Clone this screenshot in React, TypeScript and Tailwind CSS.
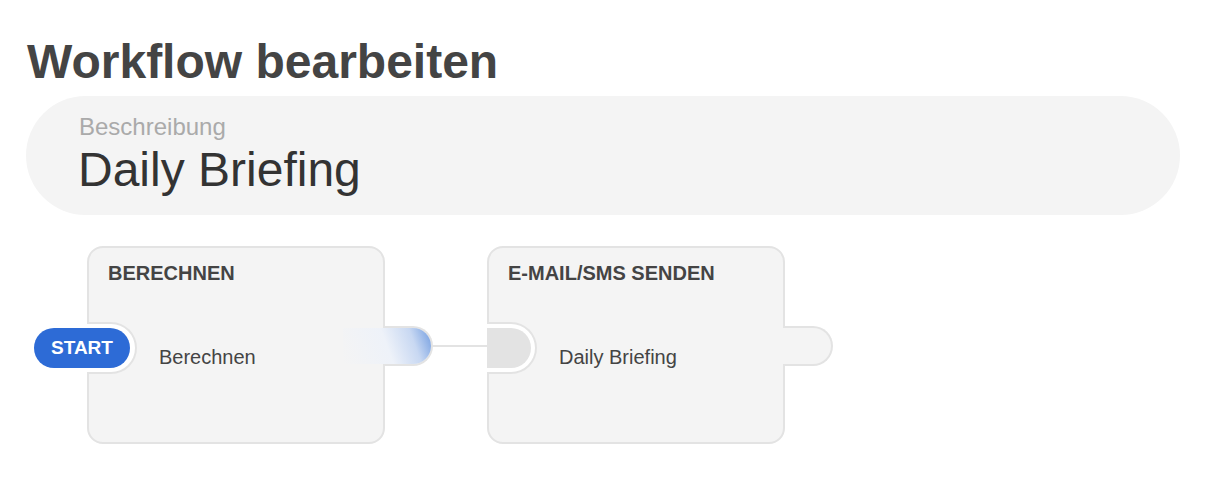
import React from 'react';

type NodeProps = {
  title: string;
  text: string;
  start?: boolean;
  connected?: boolean;
};

const WorkflowNode = ({ title, text, start, connected }: NodeProps) => {
  return (
    <div className="relative w-[298px] h-[198px] shrink-0 rounded-[16px] border-2 border-[#e3e3e3] bg-[#f4f4f4] px-[19px] pt-[13px]">
      {/* input socket */}
      <div className="absolute left-[-2px] top-[74px] w-[50px] h-[52px] rounded-r-[26px] border-2 border-l-0 border-[#e3e3e3] bg-white">
        {!start && (
          <div className="absolute left-0 top-[4px] w-[44px] h-[40px] rounded-r-[20px] bg-[#e3e3e3]" />
        )}
      </div>
      {start && (
        <div className="absolute left-[-55px] top-[80px] z-10 flex w-[96px] h-[40px] items-center justify-center rounded-full bg-[#2d6bd6] text-[19px] font-bold text-white">
          START
        </div>
      )}

      {/* output tab */}
      <div className="absolute left-full top-[78px] w-[50px] h-[40px] rounded-r-[20px] border-2 border-l-0 border-[#e3e3e3] bg-[#f4f4f4]" />
      {connected && (
        <div className="absolute right-[-48px] top-[80px] w-[88px] h-[36px] rounded-r-[18px] bg-[linear-gradient(70deg,rgba(244,244,244,0)_0%,#eef2f9_50%,#c8d8f2_78%,#729de0_100%)]" />
      )}

      <div className="text-[20px] leading-[24px] font-bold text-[#444]">{title}</div>
      <div className="mt-[60px] pl-[51px] text-[20px] leading-[24px] text-[#444]">{text}</div>
    </div>
  );
};

const App = () => {
  return (
    <div className="min-h-screen bg-white pl-[26px] pr-[28px] pt-[38px] font-['Liberation_Sans',Arial,sans-serif]">
      <h1 className="pl-px text-[48px] leading-[48px] font-bold text-[#444]">Workflow bearbeiten</h1>

      {/* Beschreibung */}
      <div className="mt-[10px] h-[119px] rounded-full bg-[#f4f4f4] pl-[53px] pt-[17px]">
        <div className="text-[24px] leading-[28px] text-[#aaa]">Beschreibung</div>
        <div className="mt-px -ml-px text-[48px] leading-[56px] text-[#333]">Daily Briefing</div>
      </div>

      {/* Workflow canvas */}
      <div className="mt-[31px] ml-[61px] flex items-center">
        <WorkflowNode title="BERECHNEN" text="Berechnen" start connected />
        <div className="mt-[2px] h-[2px] w-[102px] shrink-0 bg-[#e3e3e3]" />
        <WorkflowNode title="E-MAIL/SMS SENDEN" text="Daily Briefing" />
      </div>
    </div>
  );
};

export default App;
